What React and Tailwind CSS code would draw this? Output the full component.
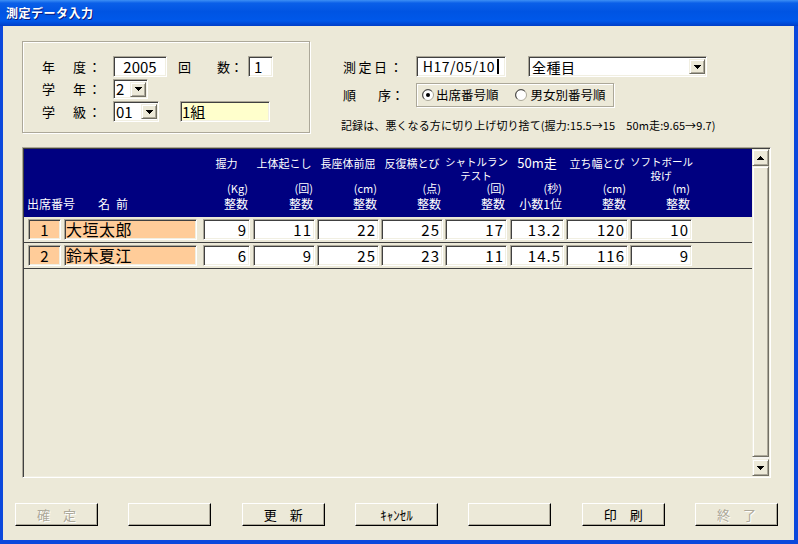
import React from 'react';

const sunken = 'border border-t-[#aca899] border-l-[#aca899] border-b-white border-r-white shadow-[inset_1px_1px_0_#404040,inset_-1px_-1px_0_#f1efe2]';
const raised = 'border border-t-[#f1efe2] border-l-[#f1efe2] border-b-[#716f64] border-r-[#716f64] shadow-[inset_1px_1px_0_#fff,inset_-1px_-1px_0_#aca899]';
const etched = 'border border-[#aca899] shadow-[inset_1px_1px_0_#fff,1px_1px_0_#fff]';

function Tri({ up }) {
  return (
    <svg width="7" height="4" viewBox="0 0 7 4" shapeRendering="crispEdges">
      <path d={up ? 'M3.5 0L7 4H0Z' : 'M0 0H7L3.5 4Z'} fill="#000" />
    </svg>
  );
}

function DropBtn() {
  return (
    <div className={`${raised} w-[16px] h-[15px] shrink-0 flex items-center justify-center bg-[#ece9d8]`}>
      <Tri />
    </div>
  );
}

const cols = [
  { cls: 'ml-[6px] w-[47px]', title: ['握力'], unit: '(Kg)', kind: '整数' },
  { cls: 'ml-[3px] w-[62px]', title: ['上体起こし'], unit: '(回)', kind: '整数' },
  { cls: 'ml-[2px] w-[62px]', title: ['長座体前屈'], unit: '(cm)', kind: '整数' },
  { cls: 'ml-[2px] w-[62px]', title: ['反復横とび'], unit: '(点)', kind: '整数' },
  { cls: 'ml-[2px] w-[62px]', title: ['シャトルラン', 'テスト'], unit: '(回)', kind: '整数' },
  { cls: 'ml-[3px] w-[54px]', title: ['50m走'], unit: '(秒)', kind: '小数1位', big: true },
  { cls: 'ml-[2px] w-[62px]', title: ['立ち幅とび'], unit: '(cm)', kind: '整数' },
  { cls: 'ml-[2px] w-[62px]', title: ['ソフトボール', '投げ'], unit: '(m)', kind: '整数' },
];

const rows = [
  { no: '1', name: '大垣太郎', v: ['9', '11', '22', '25', '17', '13.2', '120', '10'] },
  { no: '2', name: '鈴木夏江', v: ['6', '9', '25', '23', '11', '14.5', '116', '9'] },
];

const buttons = [
  { label: '確　定', off: true },
  { label: '' },
  { label: '更　新' },
  { label: 'ｷｬﾝｾﾙ' },
  { label: '' },
  { label: '印　刷' },
  { label: '終　了', off: true },
];

function Radio({ on }) {
  return (
    <svg width="12" height="12" viewBox="0 0 12 12" className="shrink-0">
      <circle cx="6" cy="6" r="5.5" fill="#fff" stroke="#aca899" />
      <path d="M2.2 9.8A5.2 5.2 0 0 1 9.8 2.2" fill="none" stroke="#404040" />
      {on && <circle cx="6" cy="6" r="2" fill="#000" />}
    </svg>
  );
}

function titleClass(c) {
  if (c.big) return 'h-[24px] text-center text-[13px] leading-[12px] whitespace-nowrap';
  if (c.title.length > 1) return '-mt-[2px] h-[26px] text-center text-[10.5px] leading-[14px] whitespace-nowrap';
  return 'h-[24px] text-center text-[11px] leading-[12px] whitespace-nowrap';
}

export default function App() {
  return (
    <div className="w-[798px] h-[544px] flex flex-col bg-[#0b48dc] font-['Noto_Sans_CJK_JP',sans-serif] text-black overflow-hidden select-none">
      {/* title bar */}
      <div className="h-[26px] shrink-0 flex items-center pl-[6px] bg-[linear-gradient(180deg,#3d8ff5_0%,#0a5fe8_12%,#0054e3_45%,#0058ea_80%,#003ec8_100%)]">
        <span className="text-white text-[12px] font-bold leading-none tracking-[0.5px] [text-shadow:1px_1px_0_#0a1a7a]">測定データ入力</span>
      </div>

      <div className="flex-1 ml-[3px] mr-[4px] mb-[4px] bg-[#ece9d8] flex flex-col">
        {/* top area */}
        <div className="mt-[15px] pl-[19px] flex">
          <div className={`${etched} w-[288px] h-[92px] pt-[14px] pl-[19px] text-[13px]`}>
            <div className="flex items-center h-[21px]">
              <span className="w-[31px]">年</span><span className="w-[15px]">度</span><span className="w-[25px]">：</span>
              <div className={`${sunken} w-[54px] h-[21px] bg-white text-[15px] leading-[19px] text-center`}>2005</div>
              <span className="ml-[11px] w-[39px]">回</span><span className="w-[13px]">数</span><span className="w-[18px]">：</span>
              <div className={`${sunken} w-[25px] h-[21px] bg-white text-[15px] leading-[19px] pl-[5px]`}>1</div>
            </div>
            <div className="flex items-center h-[20px] mt-[2px]">
              <span className="w-[31px]">学</span><span className="w-[15px]">年</span><span className="w-[25px]">：</span>
              <div className={`${sunken} w-[35px] h-[20px] bg-white flex items-center pl-[2px] pr-[1px] justify-between`}>
                <span className="text-[15px] leading-[18px]">2</span>
                <DropBtn />
              </div>
            </div>
            <div className="flex items-center h-[21px] mt-[2px]">
              <span className="w-[31px]">学</span><span className="w-[15px]">級</span><span className="w-[25px]">：</span>
              <div className={`${sunken} w-[46px] h-[21px] bg-white flex items-center pl-[2px] pr-[1px] justify-between`}>
                <span className="text-[15px] leading-[18px]">01</span>
                <DropBtn />
              </div>
              <div className={`${sunken} ml-[21px] w-[90px] h-[21px] bg-[#ffffcc] text-[15px] leading-[19px] pl-[1px]`}>1組</div>
            </div>
          </div>

          <div className="ml-[31px] pt-[15px] flex flex-col text-[13px]">
            <div className="flex items-center h-[21px]">
              <span className="w-[75px] pl-[2px] tracking-[2.5px]">測定日：</span>
              <div className={`${sunken} w-[90px] h-[21px] bg-white text-[14px] leading-[19px] flex items-center justify-center`}>
                <span className="tracking-[0.5px]">H17/05/10</span>
                <span className="ml-[2px] w-[2px] h-[15px] bg-black" />
              </div>
              <div className={`${sunken} ml-[22px] w-[179px] h-[21px] bg-white flex items-center pl-[3px] pr-[1px] justify-between`}>
                <span className="text-[14px] leading-[18px] tracking-[0.5px]">全種目</span>
                <DropBtn />
              </div>
            </div>
            <div className="flex items-center h-[24px] mt-[6px]">
              <div className="w-[75px] flex pl-[2px]">
                <span className="w-[35px]">順</span><span className="w-[13px]">序</span><span>：</span>
              </div>
              <div className={`${etched} w-[198px] h-[24px] flex items-center pl-[5px] text-[12.5px]`}>
                <Radio on />
                <span className="ml-[2px]">出席番号順</span>
                <span className="ml-[16px]"><Radio /></span>
                <span className="ml-[4px]">男女別番号順</span>
              </div>
            </div>
            <div className="mt-[12px] text-[11px] leading-[13px] whitespace-nowrap tracking-[0.1px]">
              記録は、悪くなる方に切り上げ切り捨て(握力:15.5→15　50m走:9.65→9.7)
            </div>
          </div>
        </div>

        {/* grid */}
        <div className={`${sunken} mt-[14px] ml-[19px] w-[749px] h-[331px] p-[1px] flex`}>
          <div className="w-[728px] flex flex-col">
            <div className="h-[68px] bg-[#000080] text-white flex items-start pt-[8px]">
              <div className="ml-[3px] w-[71px] mt-[39px] h-[15px] text-[12px] leading-[15px]">出席番号</div>
              <div className="w-[99px] mt-[39px] h-[15px] text-[12px] leading-[15px]">
                <span>名</span><span className="ml-[6px]">前</span>
              </div>
              {cols.map((c, i) => (
                <div key={i} className={`${c.cls} flex flex-col`}>
                  <div className={titleClass(c)}>
                    {c.title.map((t, j) => <div key={j}>{t}</div>)}
                  </div>
                  <div className="h-[15px] text-right pr-[2px] text-[11px] leading-[15px]">{c.unit}</div>
                  <div className="h-[15px] text-right pr-[2px] text-[12px] leading-[15px] whitespace-nowrap">{c.kind}</div>
                </div>
              ))}
            </div>
            {rows.map((r, i) => (
              <div key={i} className="h-[26px] pt-[2px] flex items-start border-b border-[#404040]">
                <div className={`${sunken} ml-[4px] w-[33px] h-[21px] bg-[#ffcc99] text-center text-[15px] leading-[19px]`}>{r.no}</div>
                <div className={`${sunken} ml-[3px] w-[133px] h-[21px] bg-[#ffcc99] pl-[1px] text-[16px] leading-[19px] tracking-[0.5px]`}>{r.name}</div>
                {cols.map((c, j) => (
                  <div key={j} className={`${sunken} ${c.cls} h-[21px] bg-white text-right pr-[2px] text-[15px] leading-[19px] tracking-[1px]`}>{r.v[j]}</div>
                ))}
              </div>
            ))}
          </div>
          <div className="w-[17px] flex flex-col bg-[#f5f4ef]">
            <div className={`${raised} h-[17px] bg-[#ece9d8] flex items-center justify-center`}><Tri up /></div>
            <div className={`${raised} flex-1 mb-[2px] bg-[#ece9d8]`} />
            <div className={`${raised} h-[17px] bg-[#ece9d8] flex items-center justify-center`}><Tri /></div>
          </div>
        </div>

        {/* buttons */}
        <div className="mt-[25px] pl-[12px] flex gap-[30.33px]">
          {buttons.map((b, i) => (
            <div key={i} className="w-[83px] h-[23px] border border-t-white border-l-white border-b-black border-r-black shadow-[inset_-1px_-1px_0_#aca899] flex items-center justify-center text-[13px] leading-none">
              <span className={b.off ? 'text-[#aca899] [text-shadow:1px_1px_0_#fff]' : ''}>{b.label}</span>
            </div>
          ))}
        </div>
      </div>
    </div>
  );
}
